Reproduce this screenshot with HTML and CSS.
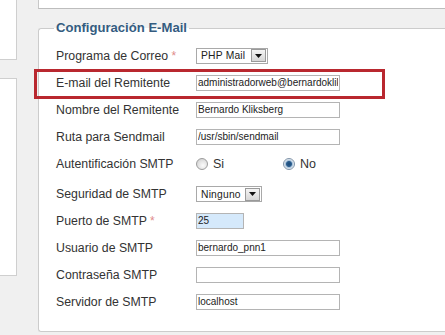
FILE: index.html
```html
<!DOCTYPE html>
<html lang="es">
<head>
<meta charset="utf-8">
<title>Configuración E-Mail</title>
<link rel="stylesheet" href="styles.css">
</head>
<body>
<div class="page">
  <aside class="side">
    <div class="side-box side-box--top"></div>
    <div class="side-box side-box--mid"></div>
  </aside>
  <main class="main">
    <div class="toolbar"></div>
    <fieldset class="panel">
      <legend class="panel-title">Configuración E-Mail</legend>
      <div class="row">
        <label class="lbl">Programa de Correo <span class="req">*</span></label>
        <div class="select select--mailer"><span class="select-text">PHP Mail</span><span class="select-btn"><svg width="7" height="4" viewBox="0 0 7 4"><path d="M0 0H7L3.5 4Z" fill="#111"/></svg></span></div>
      </div>
      <div class="row row--marked">
        <label class="lbl">E-mail del Remitente</label>
        <input class="field" type="text" value="administradorweb@bernardokliksberg.org" readonly>
      </div>
      <div class="row">
        <label class="lbl">Nombre del Remitente</label>
        <input class="field" type="text" value="Bernardo Kliksberg" readonly>
      </div>
      <div class="row">
        <label class="lbl">Ruta para Sendmail</label>
        <input class="field" type="text" value="/usr/sbin/sendmail" readonly>
      </div>
      <div class="row">
        <label class="lbl">Autentificación SMTP</label>
        <div class="radios">
          <span class="radio-opt radio-opt--first"><span class="radio"></span>Si</span>
          <span class="radio-opt"><span class="radio radio--on"></span>No</span>
        </div>
      </div>
      <div class="row row--security">
        <label class="lbl">Seguridad de SMTP</label>
        <div class="select select--security"><span class="select-text">Ninguno</span><span class="select-btn"><svg width="7" height="4" viewBox="0 0 7 4"><path d="M0 0H7L3.5 4Z" fill="#111"/></svg></span></div>
      </div>
      <div class="row">
        <label class="lbl">Puerto de SMTP <span class="req">*</span></label>
        <input class="field field--port" type="text" value="25" readonly>
      </div>
      <div class="row">
        <label class="lbl">Usuario de SMTP</label>
        <input class="field" type="text" value="bernardo_pnn1" readonly>
      </div>
      <div class="row">
        <label class="lbl">Contraseña SMTP</label>
        <input class="field" type="text" value="" readonly>
      </div>
      <div class="row">
        <label class="lbl">Servidor de SMTP</label>
        <input class="field" type="text" value="localhost" readonly>
      </div>
    </fieldset>
  </main>
</div>
</body>
</html>
```

FILE: styles.css
```css
html, body {
  margin: 0;
  padding: 0;
  height: 100%;
  overflow: hidden;
  background: #f0f0f0;
  font-family: "Liberation Sans", Arial, sans-serif;
}

.page {
  display: flex;
  height: 335px;
}

.side {
  width: 17px;
  flex: none;
  display: flex;
  flex-direction: column;
}

.side-box {
  background: #fff;
  border-right: 1px solid #cfcfcf;
  border-bottom: 1px solid #cfcfcf;
}

.side-box--top {
  height: 59px;
}

.side-box--mid {
  margin-top: 18px;
  height: 196px;
  border-top: 1px solid #cfcfcf;
}

.main {
  flex: 1;
  min-width: 0;
  margin-left: 21px;
}

.toolbar {
  height: 8px;
  background: #fff;
  border-left: 1px solid #c8c8c8;
  border-bottom: 1px solid #bdbdbd;
}

.panel {
  margin: 11px 0 0 0;
  padding: 6px 0 16px 15px;
  border: 1px solid #cccccc;
  border-right: none;
  border-radius: 3px 0 0 3px;
  background: #fff;
  min-width: 0;
}

.panel-title {
  padding: 0 2px;
  font-size: 13.1px;
  line-height: 16px;
  font-weight: bold;
  color: #345c80;
}

.row {
  display: flex;
  align-items: center;
  height: 27px;
  margin-left: 2px;
  position: relative;
}

.row--security {
  height: 26px;
  margin-top: 4px;
}

.row--marked::before {
  content: "";
  position: absolute;
  left: -22px;
  top: 0;
  width: 351px;
  height: 30px;
  box-sizing: border-box;
  border: 3px solid #b9282f;
  pointer-events: none;
}

.lbl {
  width: 140px;
  flex: none;
  font-size: 12.3px;
  color: #333;
}

.req {
  color: #e08a8a;
  font-size: 12px;
}

.field {
  box-sizing: border-box;
  width: 144px;
  height: 16px;
  margin: 0;
  padding: 0 1px;
  border: 1px solid #b4b4b4;
  background: #fff;
  font-family: "Liberation Sans", Arial, sans-serif;
  font-size: 10px;
  color: #222;
  outline: none;
}

.field--port {
  width: 48px;
  background: #d5e9fb;
}

.select {
  box-sizing: border-box;
  height: 16px;
  border: 1px solid #a9a9a9;
  background: #fff;
  display: flex;
  align-items: center;
  justify-content: space-between;
  padding: 0 1px 0 4px;
}

.select--mailer {
  width: 72px;
}

.select--security {
  width: 66px;
}

.select-text {
  font-size: 10.3px;
  letter-spacing: 0.2px;
  color: #222;
}

.select-btn {
  box-sizing: border-box;
  width: 15px;
  height: 13px;
  border: 1px solid #9a9a9a;
  background: linear-gradient(#f4f4f4, #d6d6d6);
  display: flex;
  align-items: center;
  justify-content: center;
}

.radios {
  display: flex;
  align-items: center;
}

.radio-opt {
  display: flex;
  align-items: center;
  font-size: 12.5px;
  color: #333;
}

.radio-opt--first {
  width: 87px;
}

.radio {
  box-sizing: border-box;
  width: 12px;
  height: 12px;
  margin-right: 5px;
  border-radius: 50%;
  border: 1px solid #9c9c9c;
  background: radial-gradient(circle at 60% 65%, #fbfbfb 0, #e6e6e6 45%, #c9c9c9 100%);
}

.radio--on {
  border-color: #7f93a8;
  background: radial-gradient(circle, #1c4a78 0, #2a5d8e 2.5px, #a8c2da 3.5px, #eef2f6 5px);
}
```
